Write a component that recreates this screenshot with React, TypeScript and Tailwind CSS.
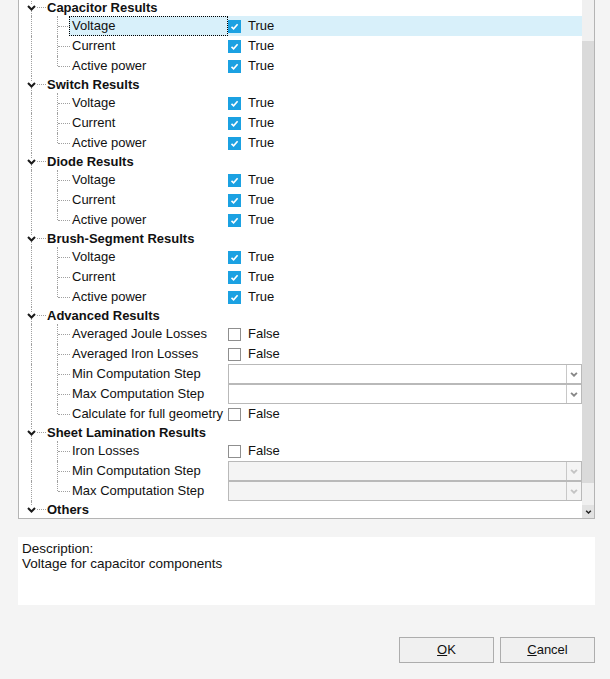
import React from "react"

type Item = {
  label: string
  kind: "check" | "combo" | "comboOff"
  value?: boolean
}

type Group = { title: string; items: Item[] }

const trio = (): Item[] => [
  { label: "Voltage", kind: "check", value: true },
  { label: "Current", kind: "check", value: true },
  { label: "Active power", kind: "check", value: true },
]

const groups: Group[] = [
  { title: "Capacitor Results", items: trio() },
  { title: "Switch Results", items: trio() },
  { title: "Diode Results", items: trio() },
  { title: "Brush-Segment Results", items: trio() },
  {
    title: "Advanced Results",
    items: [
      { label: "Averaged Joule Losses", kind: "check", value: false },
      { label: "Averaged Iron Losses", kind: "check", value: false },
      { label: "Min Computation Step", kind: "combo" },
      { label: "Max Computation Step", kind: "combo" },
      { label: "Calculate for full geometry", kind: "check", value: false },
    ],
  },
  {
    title: "Sheet Lamination Results",
    items: [
      { label: "Iron Losses", kind: "check", value: false },
      { label: "Min Computation Step", kind: "comboOff" },
      { label: "Max Computation Step", kind: "comboOff" },
    ],
  },
  { title: "Others", items: [] },
]

const Chevron = ({ className, w = 1.8 }: { className: string; w?: number }) => (
  <svg viewBox="0 0 9 6" className={className}>
    <path d="M1 1 L4.5 4.5 L8 1" fill="none" stroke="currentColor" strokeWidth={w} />
  </svg>
)

function CheckBox({ checked }: { checked: boolean }) {
  if (checked) {
    return (
      <span className="flex h-[13px] w-[13px] items-center justify-center bg-[#1ba1e2]">
        <svg viewBox="0 0 13 13" className="h-[13px] w-[13px]">
          <path d="M3.5 6.8 L5.6 8.8 L9.6 4.2" fill="none" stroke="white" strokeWidth="1.6" />
        </svg>
      </span>
    )
  }
  return <span className="h-[13px] w-[13px] border border-[#8f8f8f] bg-white" />
}

function Combo({ disabled }: { disabled: boolean }) {
  return (
    <div
      className={`flex h-[20px] w-[354px] border border-[#b9b9b9] ${disabled ? "bg-[#f4f4f4]" : "bg-white"}`}
    >
      <div className="flex-1" />
      <div className="flex w-[15px] items-center justify-center border-l border-[#c8c8c8]">
        <Chevron className={`h-[5px] w-[8px] ${disabled ? "text-[#c4c4c4]" : "text-[#888]"}`} w={2.2} />
      </div>
    </div>
  )
}

function HeaderRow({ title, last }: { title: string; last: boolean }) {
  return (
    <div className="relative flex h-[17px] items-center">
      <span
        className={`absolute left-[12px] top-0 border-l border-dotted border-[#a0a0a0] ${last ? "h-[8px]" : "h-[17px]"}`}
      />
      <span className="absolute left-[17px] top-[8px] w-[10px] border-t border-dotted border-[#a0a0a0]" />
      <span className="absolute left-[7px] top-[5px] flex h-[7px] w-[11px] items-center justify-center bg-white">
        <Chevron className="h-[6px] w-[9px] text-[#1a1a1a]" w={2} />
      </span>
      <span className="pl-[28px] text-[13px] font-bold text-[#111]">{title}</span>
    </div>
  )
}

function ItemRow({ item, lastChild, selected }: { item: Item; lastChild: boolean; selected: boolean }) {
  return (
    <div className="relative flex h-[20px] items-center">
      <span className="absolute left-[12px] top-0 h-[20px] border-l border-dotted border-[#a0a0a0]" />
      <span
        className={`absolute left-[38px] top-0 border-l border-dotted border-[#a0a0a0] ${lastChild ? "h-[10px]" : "h-[20px]"}`}
      />
      <span className="absolute left-[39px] top-[10px] w-[12px] border-t border-dotted border-[#a0a0a0]" />
      <div className={`ml-[50px] flex h-[20px] flex-1 items-center ${selected ? "bg-[#d8f0fa]" : ""}`}>
        <div
          className={`flex h-[20px] w-[159px] items-center pl-[3px] text-[13px] text-[#111] ${selected ? "border border-dotted border-black" : ""}`}
        >
          <span className={selected ? "-ml-px" : ""}>{item.label}</span>
        </div>
        {item.kind === "check" ? (
          <div className="flex items-center">
            <CheckBox checked={!!item.value} />
            <span className="ml-[7px] text-[13px] text-[#111]">{item.value ? "True" : "False"}</span>
          </div>
        ) : (
          <Combo disabled={item.kind === "comboOff"} />
        )}
      </div>
    </div>
  )
}

export default function App() {
  return (
    <div
      className="flex h-[679px] w-[610px] flex-col bg-[#f4f4f4] pl-[18px] pr-[15px]"
      style={{ fontFamily: '"Liberation Sans", Arial, sans-serif' }}
    >
      {/* Property tree */}
      <div className="flex h-[519px] border-x border-b border-[#b4b4b4] bg-white">
        <div className="flex-1 overflow-hidden">
          <div className="-mt-px">
            {groups.map((g, gi) => (
              <div key={g.title}>
                <HeaderRow title={g.title} last={gi === groups.length - 1} />
                {g.items.map((it, ii) => (
                  <ItemRow
                    key={it.label}
                    item={it}
                    lastChild={ii === g.items.length - 1}
                    selected={gi === 0 && ii === 0}
                  />
                ))}
              </div>
            ))}
          </div>
        </div>
        {/* Scrollbar */}
        <div className="flex w-[12px] flex-col bg-[#f0f0f0]">
          <div className="h-[41px]" />
          <div className="h-[442px] bg-[#dadada]" />
          <div className="flex-1" />
          <div className="flex h-[13px] items-center justify-center bg-[#e2e2e2]">
            <Chevron className="h-[4px] w-[7px] text-[#222]" w={2.2} />
          </div>
        </div>
      </div>

      {/* Description */}
      <div className="mt-[18px] h-[68px] bg-white px-[4px] pt-[4px] text-[13.5px] leading-[15px] text-[#111]">
        <div>Description:</div>
        <div>Voltage for capacitor components</div>
      </div>

      {/* Buttons */}
      <div className="mt-[32px] flex justify-end gap-[6px]">
        <button className="h-[26px] w-[95px] border border-[#adadad] bg-[#f0f0f0] text-[13px] text-[#111]">
          <span className="underline">O</span>K
        </button>
        <button className="h-[26px] w-[95px] border border-[#adadad] bg-[#f0f0f0] text-[13px] text-[#111]">
          <span className="underline">C</span>ancel
        </button>
      </div>
    </div>
  )
}
